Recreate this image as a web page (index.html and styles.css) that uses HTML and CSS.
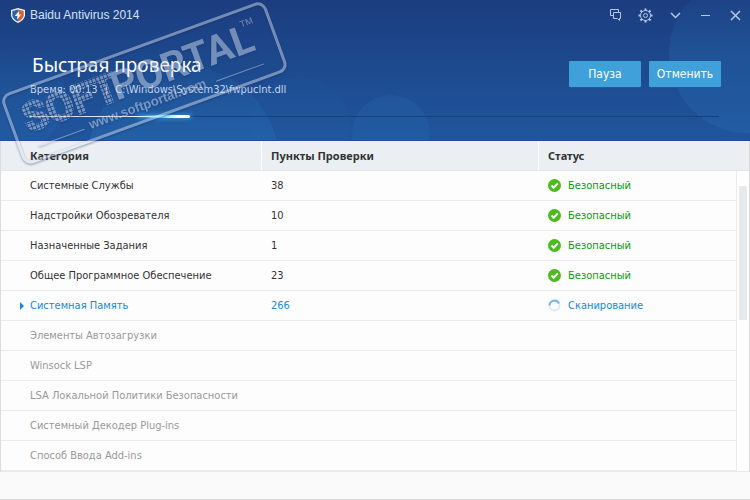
FILE: index.html
```html
<!DOCTYPE html>
<html lang="ru">
<head>
<meta charset="utf-8">
<title>Baidu Antivirus 2014</title>
<link rel="stylesheet" href="styles.css">
</head>
<body>
<div class="window">
  <header class="hero">
    <svg class="circles" aria-hidden="true">
      <defs>
        <linearGradient id="glow" x1="0" y1="0" x2="0" y2="1">
          <stop offset="0" stop-color="#2a7cc0" stop-opacity=".06"/>
          <stop offset=".5" stop-color="#2a7cc0" stop-opacity=".34"/>
          <stop offset="1" stop-color="#2a7cc0" stop-opacity=".34"/>
        </linearGradient>
      </defs>
      <circle cx="183" cy="162" r="96" fill="url(#glow)"/>
      <circle cx="16" cy="98" r="50" fill="url(#glow)" fill-opacity=".35"/>
      <circle cx="300" cy="126" r="50" fill="#2a7cc0" fill-opacity=".06"/>
      <circle cx="391" cy="134" r="39" fill="#2a7cc0" fill-opacity=".16"/>
      <svg x="100%" overflow="visible"><circle cx="-2" cy="54" r="79" fill="url(#glow)" fill-opacity=".6"/></svg>
    </svg>
    <div class="titlebar">
      <svg class="logo" viewBox="0 0 14 15" aria-hidden="true">
        <path d="M7 0L14 2V7.500Q13 12.500 7 15Q1 12.500 0 7.500V2Z" fill="#f2f5f8"/>
        <path d="M7 1.500L12.700 3V7.500Q12 11.600 7 13.600Z" fill="#c9653b"/>
        <path d="M7 1.500L1.300 3V7.500Q2 11.600 7 13.600Z" fill="#2b64a5"/>
        <path d="M8 3L3.800 8H6.400L6 11.500L10.200 6.500H7.700Z" fill="#fff"/>
      </svg>
      <span class="app-name">Baidu Antivirus 2014</span>
      <nav class="tools">
        <button aria-label="Отзыв"><svg viewBox="0 0 15 15"><path d="M5 7.500H2.500V1.500H10.500V4M5.500 4.500H12.500V10.500H11.500V12.500L9.500 10.500H5.500Z"/></svg></button>
        <button aria-label="Настройки"><svg viewBox="0 0 15 15"><circle cx="7.500" cy="7.500" r="5"/><circle cx="7.500" cy="7.500" r="2"/><path d="M7.500 .5V2.500M7.500 12.500V14.500M.5 7.500H2.500M12.500 7.500H14.500M2.500 2.500L4 4M11 11L12.500 12.500M12.500 2.500L11 4M4 11L2.500 12.500" stroke-width="2"/></svg></button>
        <button aria-label="Меню"><svg viewBox="0 0 15 15"><path d="M3 5L7.500 9.500L12 5" stroke-width="1.500"/></svg></button>
        <button aria-label="Свернуть"><svg viewBox="0 0 15 15"><path d="M3 7.500H12"/></svg></button>
        <button aria-label="Закрыть"><svg viewBox="0 0 15 15"><path d="M3 3L12 12M12 3L3 12" stroke-width="1.500"/></svg></button>
      </nav>
    </div>
    <div class="summary">
      <div class="scan">
        <h1>Быстрая проверка</h1>
        <p>Время: 00:13 <span class="sep">|</span> C:\Windows\System32\fwpuclnt.dll</p>
      </div>
      <div class="actions">
        <button>Пауза</button>
        <button>Отменить</button>
      </div>
    </div>
    <div class="progress" role="progressbar" aria-label="Быстрая проверка" aria-valuenow="23"><div class="bar" style="width:23%"></div></div>
  </header>
  <div class="results">
    <table>
      <thead><tr><th class="c1">Категория</th><th class="c2">Пункты Проверки</th><th>Статус</th></tr></thead>
      <tbody>
        <tr><td>Системные Службы</td><td>38</td><td class="safe"><svg viewBox="0 0 13 13"><circle cx="6.500" cy="6.500" r="6.500"/><path d="M3.500 6.500L5.700 8.800L9.800 4.400"/></svg>Безопасный</td></tr>
        <tr><td>Надстройки Обозревателя</td><td>10</td><td class="safe"><svg viewBox="0 0 13 13"><circle cx="6.500" cy="6.500" r="6.500"/><path d="M3.500 6.500L5.700 8.800L9.800 4.400"/></svg>Безопасный</td></tr>
        <tr><td>Назначенные Задания</td><td>1</td><td class="safe"><svg viewBox="0 0 13 13"><circle cx="6.500" cy="6.500" r="6.500"/><path d="M3.500 6.500L5.700 8.800L9.800 4.400"/></svg>Безопасный</td></tr>
        <tr><td>Общее Программное Обеспечение</td><td>23</td><td class="safe"><svg viewBox="0 0 13 13"><circle cx="6.500" cy="6.500" r="6.500"/><path d="M3.500 6.500L5.700 8.800L9.800 4.400"/></svg>Безопасный</td></tr>
        <tr class="active"><td>Системная Память</td><td>266</td><td class="scanning"><svg viewBox="0 0 13 13"><circle cx="6.500" cy="6.500" r="5" stroke="#e3e9ee"/><path d="M1.500 6.500A5 5 0 0 1 11 4.500" stroke="#7ab8ee"/></svg>Сканирование</td></tr>
        <tr class="waiting"><td>Элементы Автозагрузки</td><td></td><td></td></tr>
        <tr class="waiting"><td>Winsock LSP</td><td></td><td></td></tr>
        <tr class="waiting"><td>LSA Локальной Политики Безопасности</td><td></td><td></td></tr>
        <tr class="waiting"><td>Системный Декодер Plug-ins</td><td></td><td></td></tr>
        <tr class="waiting"><td>Способ Ввода Add-ins</td><td></td><td></td></tr>
      </tbody>
    </table>
    <div class="scrollbar"><div class="thumb"></div></div>
  </div>
  <svg class="stamp" viewBox="0 0 290 168" aria-hidden="true">
    <defs>
      <pattern id="dots" width="4" height="4" patternUnits="userSpaceOnUse"><rect width="3" height="3" fill="#dfe6f2"/></pattern>
    </defs>
    <g transform="translate(144 82) rotate(-20)" fill="#dfe6f2">
      <rect x="-139" y="-35" width="278" height="72" rx="8" fill="none" stroke="#dfe6f2" stroke-width="3"/>
      <text x="-126" y="8" class="stamp-name" fill="url(#dots)" stroke="url(#dots)" stroke-width="2">SOFT</text>
      <text x="-32" y="8" class="stamp-name">PORTAL</text>
      <text x="110" y="-18" class="stamp-tm">TM</text>
      <text x="-66" y="26" class="stamp-url">www.softportal.com</text>
      <path d="M-121 24H-72M68 24H119" stroke="#dfe6f2" fill="none"/>
    </g>
  </svg>
</div>
</body>
</html>
```
FILE: styles.css
```css
* { box-sizing: border-box; }
body {
  margin: 0;
  font: 11px/14px "DejaVu Sans Condensed", Tahoma, sans-serif;
  color: #333;
}
button { font: inherit; border: 0; padding: 0; background: none; color: inherit; }
.window {
  position: relative;
  min-height: 100vh;
  display: flex;
  flex-direction: column;
  background: #fafafa;
  border-bottom: 1px solid #dcdcdc;
}
.hero {
  position: relative;
  height: 141px;
  padding-top: 3px;
  background: linear-gradient(#1c3d80, #1d498d 45%, #20559d);
  border-bottom: 1px solid #204f97;
  color: #e4ecf8;
}
.circles { position: absolute; inset: 0; width: 100%; height: 100%; }
.titlebar, .summary, .progress { position: relative; }
.titlebar { display: flex; align-items: center; height: 24px; padding: 0 7px 0 11px; }
.logo { width: 14px; height: 15px; margin-right: 5px; }
.app-name { font: 12px/16px "Liberation Sans", Arial, sans-serif; color: #d3e2f7; }
.tools { display: flex; gap: 15px; margin-left: auto; }
.tools button { width: 15px; height: 15px; }
.tools svg { display: block; width: 15px; height: 15px; fill: none; stroke: #b5c9e6; }
.summary { display: flex; justify-content: space-between; padding: 24px 29px 0 30px; }
h1 { margin: 0 0 4px 2px; font: 19px/28px "Noto Sans", sans-serif; color: #fff; }
p { margin: 0; color: #c6d6ef; }
.sep { margin: 0 4px; }
.actions { display: flex; gap: 8px; padding-top: 10px; }
.actions button { width: 72px; height: 26px; background: #3fa0da; border-radius: 1px; color: #fff; box-shadow: 0 1px #1b5a9c; font-size: 12px; }
.progress { height: 1px; margin: 19px 31px 0 30px; background: #194179; }
.bar { height: 1px; background: linear-gradient(90deg, #b6cdea, #fff 80%); position: relative; }
.bar::after {
  content: "";
  position: absolute;
  right: -2px;
  top: -1px;
  width: 55px;
  height: 3px;
  border-radius: 2px;
  background: linear-gradient(90deg, #4bb6ef00, #8fdcff 50%, #fff 80%);
  box-shadow: 2px 0 5px #37a7ea;
}
.results { display: flex; border: solid #dcdcdc; border-width: 0 1px; background: #fff; position: relative; border-bottom: 1px solid #ebebeb; }
table { width: 100%; border-collapse: separate; border-spacing: 0; table-layout: fixed; }
th { height: 30px; padding: 0 0 0 9px; background: #ebeff3; border-bottom: 1px solid #e3e7ea; text-align: left; font: bold 11px/14px "Noto Sans", Tahoma, sans-serif; }
th + th { border-left: 1px solid #fff; }
.c1 { width: 260px; padding-left: 29px; }
.c2 { width: 277px; }
td { height: 30px; padding: 0 0 0 10px; background: #fdfdfd; border-bottom: 1px solid #ebebeb; }
td:first-child { padding-left: 29px; }
td svg { width: 13px; height: 13px; margin-right: 7px; vertical-align: -3px; }
.safe { color: #0a9a0a; }
.safe circle { fill: #4bbb1e; }
.safe path { fill: none; stroke: #fff; stroke-width: 2; }
.active { color: #1489e0; }
.scanning svg { fill: none; stroke-width: 2; }
.active td:first-child::before { content: ""; float: left; margin: 3px 0 0 -10px; border: solid transparent; border-width: 4px 0 4px 4px; border-left-color: #1489e0; }
.waiting { color: #999; }
.scrollbar { position: absolute; right: 0; top: 30px; bottom: 0; width: 13px; background: #fff; border-left: 1px solid #ebebeb; padding: 15px 2px 0; }
.thumb { height: 47%; background: #e6eaed; }
.stamp { position: absolute; left: 0; top: 0; width: 290px; height: 168px; opacity: .45; filter: drop-shadow(0 1px 1px #102c60); pointer-events: none; }
.stamp-name { font: bold 40px Roboto, sans-serif; }
.stamp-tm { font: 9px "Liberation Sans", sans-serif; }
.stamp-url { font: bold 13px "Liberation Sans", sans-serif; }
```
